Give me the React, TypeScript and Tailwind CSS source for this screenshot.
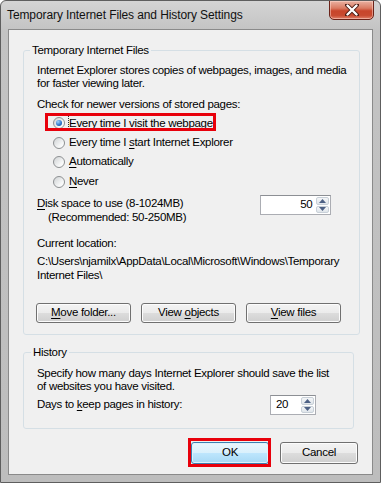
import React from "react";

function Radio({ checked }: { checked?: boolean }) {
  return (
    <span className="w-[12px] h-[12px] rounded-full border border-[#8d9092] bg-[linear-gradient(135deg,#cfd2d4,#f7f8f8_70%,#ffffff)] flex items-center justify-center shrink-0">
      {checked && (
        <span className="w-[6px] h-[6px] rounded-full bg-[radial-gradient(circle_at_35%_30%,#9fd4ff,#2a70c6_60%,#174f96)]" />
      )}
    </span>
  );
}

function U({ children }: { children: React.ReactNode }) {
  return <span className="underline underline-offset-[2px]">{children}</span>;
}

function Btn({ children, w = "w-[95px]" }: { children: React.ReactNode; w?: string }) {
  return (
    <div
      className={`${w} h-[20px] rounded-[3px] border border-[#707070] bg-[linear-gradient(180deg,#f3f3f3_0%,#ebebeb_50%,#dddddd_50%,#cfcfcf_100%)] flex items-center justify-center shadow-[inset_0_0_0_1px_#fcfcfc]`}
    >
      {children}
    </div>
  );
}

function Spin({ value, w, align }: { value: string; w: string; align: "left" | "right" }) {
  return (
    <div className={`${w} h-[20px] border border-[#abadb3] border-t-[#8c8f94] bg-white flex items-stretch`}>
      <div className={`flex-1 flex items-center ${align === "right" ? "justify-end pr-[3px]" : "justify-start pl-[5px]"}`}>
        {value}
      </div>
      <div className="w-[15px] flex flex-col p-[1px] gap-[1px]">
        <div className="flex-1 rounded-[2px] border border-[#c8d0d8] bg-[linear-gradient(180deg,#f4f6f8,#dfe5ea)] flex items-center justify-center">
          <svg width="7" height="4" viewBox="0 0 7 4"><path d="M0 4 L3.5 0 L7 4 Z" fill="#4d6185" /></svg>
        </div>
        <div className="flex-1 rounded-[2px] border border-[#c8d0d8] bg-[linear-gradient(180deg,#f4f6f8,#dfe5ea)] flex items-center justify-center">
          <svg width="7" height="4" viewBox="0 0 7 4"><path d="M0 0 L3.5 4 L7 0 Z" fill="#4d6185" /></svg>
        </div>
      </div>
    </div>
  );
}

export default function App() {
  return (
    <div className="w-[381px] h-[483px] bg-[linear-gradient(180deg,#d4d4d4_0px,#c3c3c3_30px,#bdbdbd_100%)] border border-[#5e5e5e] rounded-t-[6px] flex flex-col font-['Liberation_Sans',Arial,sans-serif] text-[11.5px] tracking-[-0.3px] whitespace-nowrap text-black overflow-hidden">
      {/* Title bar */}
      <div className="h-[28px] flex items-start shrink-0">
        <div className="pl-[6px] pt-[7px] text-[12px] leading-[15px] tracking-[-0.1px] text-[#111]">
          Temporary Internet Files and History Settings
        </div>
        <div className="ml-auto mr-[6px] -mt-[1px] w-[45px] h-[20px] rounded-b-[5px] border border-[#6b2319] bg-[linear-gradient(180deg,#eab2a2_0%,#d97a62_40%,#c8452b_55%,#c84a30_80%,#e0806a_100%)] flex items-center justify-center shadow-[inset_0_0_0_1px_rgba(255,220,210,0.5)]">
          <svg width="14" height="12" viewBox="0 0 14 12">
            <path d="M2 1 L12 11 M12 1 L2 11" stroke="#4a1a12" strokeWidth="4" strokeLinecap="round" fill="none" />
            <path d="M2.5 1.5 L11.5 10.5 M11.5 1.5 L2.5 10.5" stroke="#ffffff" strokeWidth="2.4" strokeLinecap="round" fill="none" />
          </svg>
        </div>
      </div>

      {/* Client */}
      <div className="mx-[7px] h-[446px] border border-[#8a8a8a] bg-[#f0f0f0] px-[14px] pt-[13px] flex flex-col shrink-0">
        <fieldset className="w-[335px] h-[292px] border border-[#d5dfe5] rounded-[3px] px-[13px] m-0 flex flex-col">
          <legend className="ml-[-7px] px-[2px] leading-[15px]">Temporary Internet Files</legend>
          <div className="mt-[6px] leading-[13px]">
            Internet Explorer stores copies of webpages, images, and media
            <br />
            for faster viewing later.
          </div>
          <div className="mt-[7px] leading-[14px] h-[14px]">Check for newer versions of stored pages:</div>
          <div className="mt-[2px] h-[20px] flex items-center pl-[16px]">
            <div className="relative flex items-center gap-[4px]">
              <div className="absolute -left-[8px] -right-[3px] -top-[3px] -bottom-[1px] border-[3px] border-[#e8000b]" />
              <Radio checked />
              <span className="leading-[14px] outline outline-1 outline-dotted outline-[#333] outline-offset-[0px]">
                <U>E</U>very time I visit the webpage
              </span>
            </div>
          </div>
          <div className="h-[19px] flex items-center pl-[16px] gap-[4px]">
            <Radio />
            <span>Every time I <U>s</U>tart Internet Explorer</span>
          </div>
          <div className="h-[20px] flex items-center pl-[16px] gap-[4px]">
            <Radio />
            <span><U>A</U>utomatically</span>
          </div>
          <div className="h-[19px] flex items-center pl-[16px] gap-[4px]">
            <Radio />
            <span><U>N</U>ever</span>
          </div>
          <div className="mt-[5px] flex items-start">
            <div className="leading-[14px]">
              <div><U>D</U>isk space to use (8-1024MB)</div>
              <div className="pl-[11px]">(Recommended: 50-250MB)</div>
            </div>
            <div className="ml-auto mr-[15px] -mt-[1px]">
              <Spin value="50" w="w-[71px]" align="right" />
            </div>
          </div>
          <div className="mt-[12px] leading-[14px]">Current location:</div>
          <div className="mt-[4px] leading-[14px]">
            C:\Users\njamilx\AppData\Local\Microsoft\Windows\Temporary
            <br />
            Internet Files\
          </div>
          <div className="mt-[21px] -ml-[1px] flex gap-[10px]">
            <Btn><span><U>M</U>ove folder...</span></Btn>
            <Btn><span>View <U>o</U>bjects</span></Btn>
            <Btn><span><U>V</U>iew files</span></Btn>
          </div>
        </fieldset>

        <fieldset className="mt-[10px] w-[331px] h-[84px] border border-[#d5dfe5] rounded-[3px] px-[13px] m-0 flex flex-col">
          <legend className="ml-[-6px] px-[2px] leading-[15px]">History</legend>
          <div className="mt-[7px] leading-[12.5px]">
            Specify how many days Internet Explorer should save the list
            <br />
            of websites you have visited.
          </div>
          <div className="mt-[3px] h-[20px] flex items-center">
            <span>Days to <U>k</U>eep pages in history:</span>
            <div className="ml-auto mr-[24px]">
              <Spin value="20" w="w-[46px]" align="left" />
            </div>
          </div>
        </fieldset>

        <div className="mt-[13px] w-[335px] flex justify-end gap-[11px]">
          <div className="relative">
            <div className="absolute -left-[3px] -right-[2px] -top-[4px] -bottom-[3px] border-[3px] border-[#e8000b]" />
            <div className="w-[78px] h-[22px] rounded-[3px] border border-[#3c7fb1] bg-[linear-gradient(180deg,#eaf6fd_0%,#d9f0fc_50%,#bee6fd_50%,#a7d9f5_100%)] flex items-center justify-center shadow-[inset_0_0_0_1px_#dff2fc]">
              OK
            </div>
          </div>
          <div className="w-[78px] h-[22px] rounded-[3px] border border-[#707070] bg-[linear-gradient(180deg,#f3f3f3_0%,#ebebeb_50%,#dddddd_50%,#cfcfcf_100%)] flex items-center justify-center shadow-[inset_0_0_0_1px_#fcfcfc]">
            Cancel
          </div>
        </div>
      </div>
    </div>
  );
}
